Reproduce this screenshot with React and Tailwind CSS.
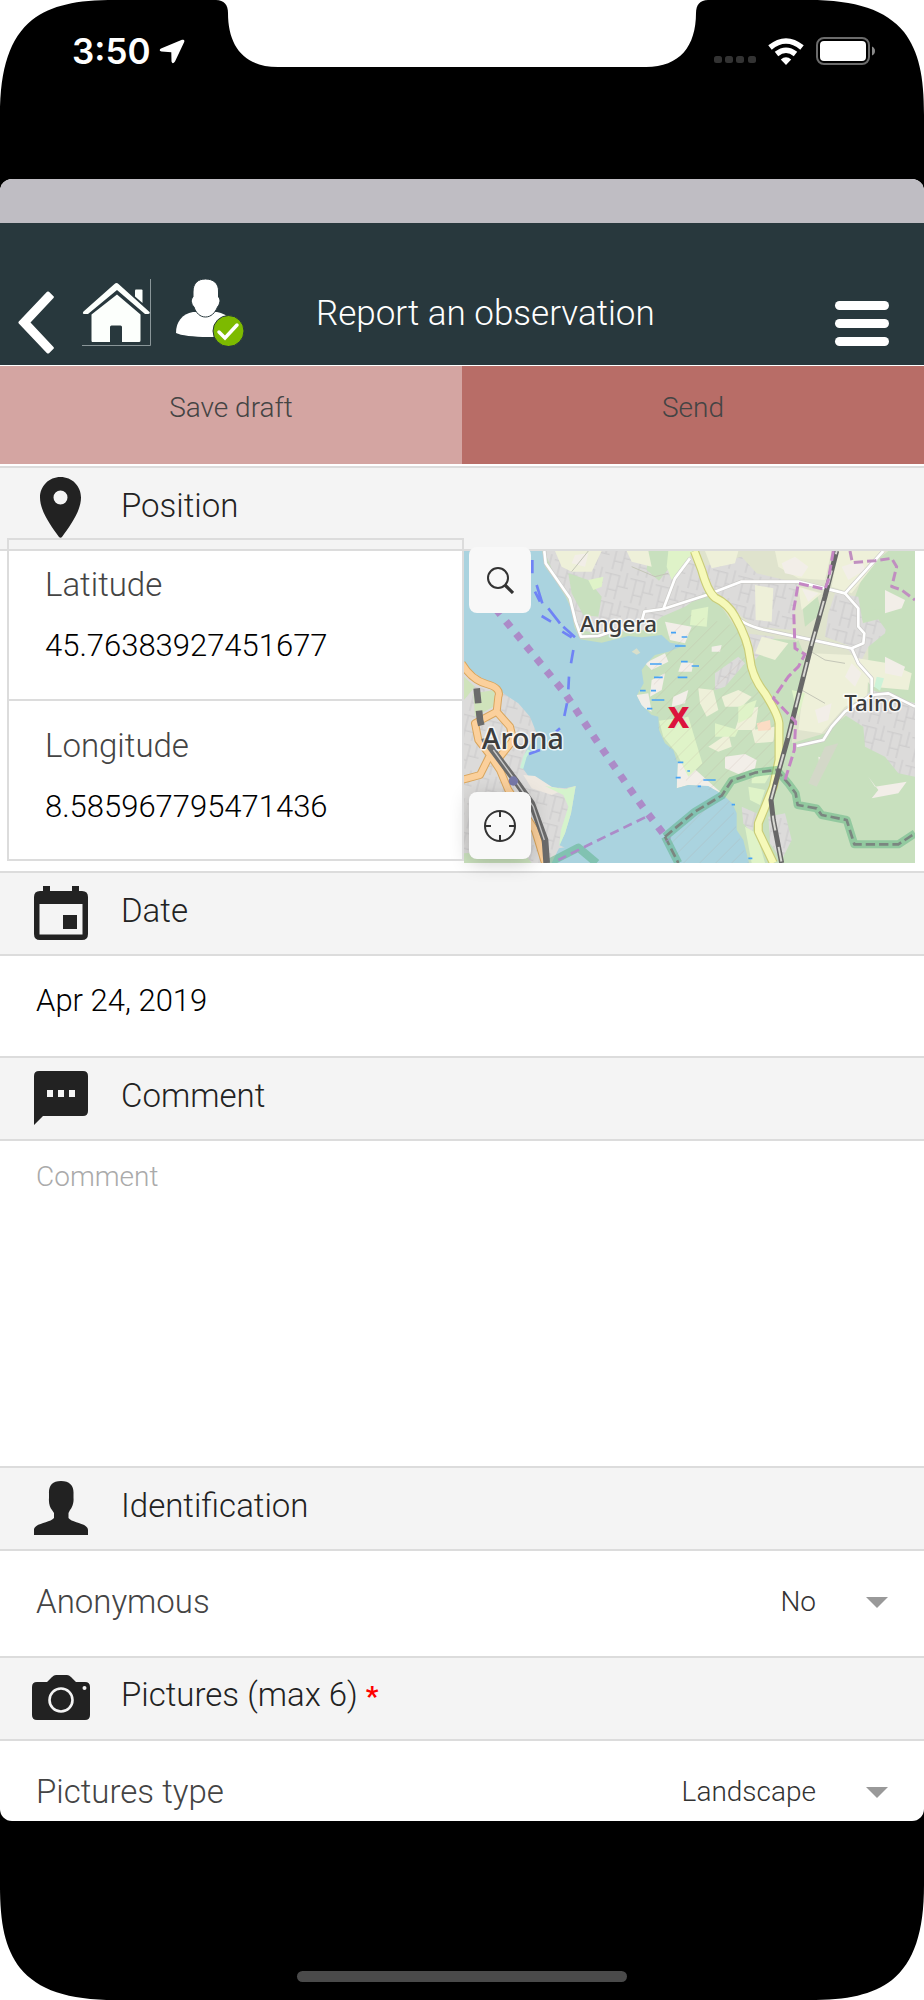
import { useState } from "react"

function Corner({ className }) {
  return (
    <svg viewBox="0 0 115 115" className={`absolute h-[115px] w-[115px] fill-white ${className}`} aria-hidden="true">
      <path d="M0 0H115C76 0 52 5 32 20C10 38 0 68 0 115Z" />
    </svg>
  )
}

function StatusBar() {
  return (
    <div className="flex h-[102px] items-center justify-between pr-12 pl-[72px] text-white">
      <div className="flex items-center gap-2">
        <span className="font-[Inter,sans-serif] text-[35px] leading-10 font-semibold">3:50</span>
        <svg viewBox="0 0 26 25" className="h-[25px] w-[26px] fill-white" aria-hidden="true">
          <path d="M2 9.500L23 .8Q26 0 25.200 3L16 22.500Q13.500 26 12.500 22.500L12.300 13.200L2.500 12.500Q-.8 11.500 2 9.500Z" />
        </svg>
      </div>
      <div className="flex items-center gap-3">
        <svg viewBox="0 0 42 28" className="h-7 w-[42px] fill-[#333]" aria-hidden="true">
          <rect x="0" y="19" width="8" height="7" rx="2.500" />
          <rect x="11" y="19" width="8" height="7" rx="2.500" />
          <rect x="22" y="19" width="8" height="7" rx="2.500" />
          <rect x="34" y="19" width="8" height="7" rx="2.500" />
        </svg>
        <svg viewBox="0 0 36 27" className="h-[27px] w-9" aria-hidden="true">
          <g fill="none" stroke="white" strokeWidth="5.500">
            <path d="M2 9.500Q18 -3.500 34 9.500" />
            <path d="M8.500 16Q18 8.500 27.500 16" />
          </g>
          <path d="M18 27L12.800 21.500Q18 17 23.200 21.500Z" fill="white" />
        </svg>
        <svg viewBox="0 0 60 28" className="h-7 w-[60px]" aria-hidden="true">
          <rect x="1" y="1" width="52" height="26" rx="7" fill="none" stroke="#6b6b6b" strokeWidth="2" />
          <rect x="4" y="4" width="46" height="20" rx="4" fill="white" />
          <path d="M56 9.500Q59 11 59 14T56 18.500Z" fill="#8a8a8a" />
        </svg>
      </div>
    </div>
  )
}

function Header() {
  return (
    <header className="flex h-[143px] items-start border-b border-white bg-[#28383d] pr-[35px] pl-[18px] text-white">
      <button type="button" aria-label="Back" className="mt-[68px]">
        <svg viewBox="0 0 36 63" className="h-[63px] w-9 fill-white">
          <path d="M29 .8Q30 0 31 .8L35.500 5.300Q36.300 6 35.500 7L12.500 31.500L35.500 56Q36.300 57 35.500 57.800L31 62.200Q30 63 29 62.200L.8 32.500Q0 31.500 .8 30.500Z" />
        </svg>
      </button>
      <button type="button" aria-label="Home" className="mt-14 ml-7">
        <svg viewBox="0 0 69 67" className="h-[67px] w-[69px]">
          <path d="M68.500 0V66.500H0" fill="none" stroke="#8a9699" />
          <g fill="#fcfffc">
            <path d="M53 11.500Q53 10.500 54 10.500H59.500Q60.500 10.500 60.500 11.500V24L53 17.500Z" />
            <path d="M34.500 4Q35.500 4 36.500 5L67.500 33Q68.500 34.500 66 35H63L35 11L6 35H2Q0 34.500 1.500 32.500L32.500 5Q33.500 4 34.500 4Z" />
            <path d="M35 15.500L58.500 35.500V61.500Q58.500 63 57 63H40V48Q40 46.500 38.500 46.500H29.500Q28 46.500 28 48V63H10.500Q9.500 63 9.500 61.500V35.500Z" />
          </g>
        </svg>
      </button>
      <button type="button" aria-label="Account" className="mt-14 ml-[25px]">
        <svg viewBox="0 0 68 67" className="h-[67px] w-[68px]">
          <path d="M17 33C6 35 0 43 0 54C8 58.500 50 60 58 54C58 43 52 35 41 33Z" fill="white" />
          <path d="M29.500 0C37 0 43 4 42.500 13V18C45 20 44 25 41.500 28C39 34 35 38 29.500 38S20 34 18 28C15 25 14.500 20 17 18V13C17 4 22 0 29.500 0Z" fill="white" stroke="#28383d" />
          <circle cx="52.500" cy="52" r="15.500" fill="#7dba00" stroke="#28383d" />
          <path d="M43 53L49 59L61 46" fill="none" stroke="white" strokeWidth="3.500" strokeLinecap="round" />
        </svg>
      </button>
      <h1 className="mt-[65px] ml-[72px] flex-1 text-[35px] leading-[52px] font-[350]">Report an observation</h1>
      <button type="button" aria-label="Menu" className="mt-[78px] flex w-[54px] flex-col gap-[9px]">
        <span className="h-[9px] w-full rounded-full bg-white" />
        <span className="h-[9px] w-full rounded-full bg-white" />
        <span className="h-[9px] w-full rounded-full bg-white" />
      </button>
    </header>
  )
}

function PinIcon() {
  return (
    <svg viewBox="0 0 41 61" className="h-[61px] w-[41px] fill-[#222]" aria-hidden="true">
      <path fillRule="evenodd" d="M20.500 0C32 0 41 9 41 20.500C41 34 30 49 22 60Q20.500 61.500 19 60C11 49 0 34 0 20.500C0 9 9 0 20.500 0ZM20.500 13.500A7 7 0 1 0 20.500 27.500A7 7 0 1 0 20.500 13.500Z" />
    </svg>
  )
}

function CalendarIcon() {
  return (
    <svg viewBox="0 0 54 54" className="h-[54px] w-[54px] fill-[#222]" aria-hidden="true">
      <path fillRule="evenodd" d="M9 0H16V5H38V0H45V5H48Q54 5 54 11V48Q54 54 48 54H6Q0 54 0 48V11Q0 5 6 5H9ZM5.500 18V48.500H48.500V18Z" />
      <rect x="29" y="29" width="14" height="14" />
    </svg>
  )
}

function CommentIcon() {
  return (
    <svg viewBox="0 0 54 54" className="h-[54px] w-[54px] fill-[#222]" aria-hidden="true">
      <path fillRule="evenodd" d="M5 0H49Q54 0 54 5V40Q54 45 49 45H9L0 54V5Q0 0 5 0ZM13 19V26H19V19ZM24 19V26H30V19ZM35 19V26H41V19Z" />
    </svg>
  )
}

function PersonIcon() {
  return (
    <svg viewBox="0 0 54 54" className="h-[54px] w-[54px] fill-[#222]" aria-hidden="true">
      <path d="M27 0C36 0 40 5 39.500 13V17C40 22 38 27 36 29L34.500 32V37C38 42 54 42 54 49V54H0V49C0 42 16 42 20 37V32L18 29C16 27 14.500 22 15 17V13C14.500 5 18 0 27 0Z" />
    </svg>
  )
}

function CameraIcon() {
  return (
    <svg viewBox="0 0 58 45" className="h-[45px] w-[58px] fill-[#222]" aria-hidden="true">
      <path d="M20 2Q22 0 24 0H35Q37 0 39 2L44 7H53Q58 7 58 12V40Q58 45 53 45H5Q0 45 0 40V12Q0 7 5 7H15Z" />
      <circle cx="29" cy="25" r="11.500" fill="none" stroke="#f4f4f4" strokeWidth="2.600" />
      <circle cx="52.500" cy="13" r="2" fill="#f4f4f4" />
    </svg>
  )
}

function SectionTitle({ icon, children }) {
  return (
    <div className="flex h-[85px] items-center border-y-2 border-[#dcdcdc] bg-[#f4f4f4]">
      <div className="flex w-[121px] justify-center pb-[2px]">{icon}</div>
      <h2 className="pb-[6px] text-[33px] leading-10 font-[350] text-[#222]">{children}</h2>
    </div>
  )
}

function SelectRow({ id, label, value, onChange, options }) {
  return (
    <div className="flex items-center gap-[50px] px-9">
      <label htmlFor={id} className="flex-1 text-[33px] leading-10 text-[#444]">{label}</label>
      <select id={id} value={value} onChange={onChange} className="appearance-none bg-transparent text-[28px] leading-10 text-[#333] [text-align-last:right]">
        {options.map((option) => <option key={option}>{option}</option>)}
      </select>
      <svg viewBox="0 0 22 11" className="h-[11px] w-[22px] fill-[#999]" aria-hidden="true">
        <path d="M0 0H22L11 11Z" />
      </svg>
    </div>
  )
}

const woods = [
  "M340 130L400 150L440 200L430 260L385 255L350 190Z",
  "M580 63H640L645 110L612 152L575 120Z",
  "M1040 210L1085 190L1100 250L1050 290Z",
  "M1250 240L1380 230V400L1310 410L1255 350L1300 310Z",
]

const urban = [
  "M268 63H712L760 180L690 230L620 260L570 300L430 310L372 300L350 220L300 140Z",
  "M740 110L860 80L905 130L1030 160L1010 300L900 290L835 240L780 195Z",
  "M1140 190L1210 200L1230 320L1190 350L1110 320L1120 250Z",
  "M1250 480L1380 520V740L1330 730L1290 680L1230 650L1225 590L1170 555Z",
  "M870 310L960 320L900 390Z",
  "M1180 290L1300 260L1290 310L1240 350L1215 400L1180 360Z",
  "M780 430L850 380L870 400L810 470L780 480Z",
  "M940 860L990 850L1010 930L980 990L945 940Z",
  "M860 830L905 850L890 910L865 880Z",
]

const cream = [
  "M300 63H440L410 125L350 125L320 110Z", "M515 63H580L590 110L530 95Z",
  "M750 63H850L840 100L770 115Z", "M960 63H1130L1110 150L1030 145L970 110Z",
  "M1150 63H1290L1190 190L1130 170Z", "M900 165L955 175L950 275L902 270Z",
  "M1030 170L1100 190L1040 240Z", "M1070 370L1190 375L1240 440L1235 500L1170 530L1100 610L1030 600L1045 480Z",
  "M1180 380L1300 400L1370 430L1360 480L1250 470Z", "M730 475L775 480L790 540L755 560L735 520Z",
  "M760 650L820 610L830 650L790 665Z", "M860 540L910 530L900 600L840 600Z",
  "M890 600L960 590L955 635L900 640Z", "M800 500L850 480L890 500L860 530L810 530Z",
  "M920 320L1000 340L960 390L900 370Z",
]

const pale = [
  "M810 680L870 672L905 690L900 715L850 732L810 715Z", "M570 400L630 370L640 395L590 420Z",
  "M545 495L580 490L590 545L560 530Z", "M590 450L630 430L620 480L585 500Z",
  "M680 395L715 400L710 425L670 425Z", "M630 275L710 290L690 340L645 330Z",
  "M668 695L700 700L800 790L760 770L700 765L665 775Z", "M655 500L700 480L690 520L650 530Z",
  "M1240 740L1260 770L1355 755L1330 790L1250 805L1270 780Z", "M1090 680L1120 690L1095 715Z",
  "M770 350L800 345L795 365L770 365Z", "M1290 180L1350 210L1340 235L1290 250Z",
  "M980 100L1020 80L1060 110L1040 140L990 130Z", "M1040 175L1090 190L1060 215Z",
  "M1160 110L1220 90L1230 120L1180 150Z", "M1080 540L1130 520L1120 570L1090 580Z",
  "M1190 400L1220 430L1200 470L1170 440Z", "M1290 380L1350 410L1340 440L1290 430Z",
  "M360 75L400 70L390 110L350 100Z",
]

const meadow = [
  "M612 572L700 560L742 700L700 740L665 670L625 620Z", "M710 240L760 230L755 290L705 285Z",
  "M640 63H712L690 110L650 150L635 110Z", "M850 530L905 510L890 560L850 580Z",
  "M890 720L950 725L930 760L890 760Z", "M870 890L905 910L930 999H890Z",
  "M780 580L850 600L840 620L780 620Z", "M880 770L930 780L915 825L885 810Z",
  "M1010 480L1050 490L1030 560Z", "M400 150L445 140L440 170L415 180Z",
]

const whiteRoads = [
  "M268 63L272 100L345 205L362 275L378 320L430 318L560 275L568 245L625 237L755 195L858 155L1030 155L1170 190L1285 63",
  "M705 85L660 145L625 237",
  "M835 250Q860 285 930 300L1190 355L1225 340L1228 310L1210 290L1210 235L1170 190",
  "M1190 355L1210 400L1250 445V495L1300 490L1380 530",
  "M1250 495L1170 545L1130 590L1105 630L1025 648",
]

const orangeRoads = [
  "M20 400Q50 450 95 462T130 500L125 545L165 590L175 630L135 680",
  "M125 545L60 580L70 630L105 675L75 735L20 750",
  "M105 675L135 720L160 780L240 900L270 999",
]

const provincialRoad = "M718 63L740 120Q758 185 780 203Q820 222 840 260Q880 330 885 385T930 490Q970 555 972 580L972 690L955 770L910 880V905L955 999"
const railway = "M1145 63L1110 200L1068 350L1030 500L1000 620L968 735L948 810L955 870L980 999"
const marsh = "M648 308H663M680 321H697M660 348H692M585 402H620M678 395H698M710 408H732M597 442H623M668 442H697M555 482H572M588 482H603M590 510H628M576 536H592M668 697H685M697 723H705M662 743H677M745 750H782M728 769H738M830 824H840M880 985H892"

// OpenStreetMap style tile around Lago Maggiore
function MapView() {
  return (
    <svg viewBox="27 63 1353 936" preserveAspectRatio="xMidYMid slice" className="absolute inset-0 h-full w-full" role="img" aria-label="Map of Angera, Arona and Taino">
      <defs>
        <pattern id="streets" width="78" height="86" patternUnits="userSpaceOnUse" patternTransform="rotate(14)">
          <rect width="78" height="86" fill="#dcdbda" />
          <path d="M0 14H45V86M45 45H78M18 14V60H45M66 0V45M18 60V86" fill="none" stroke="#cbcacb" strokeWidth="3" />
        </pattern>
        <pattern id="reserve" width="34" height="34" patternUnits="userSpaceOnUse" patternTransform="rotate(45)">
          <path d="M0 0V34" stroke="#b79c90" strokeWidth="2" opacity=".45" />
        </pattern>
      </defs>
      <rect x="27" y="63" width="1353" height="936" fill="#c8e0be" />
      <path d="M730 63H1300L1230 120L1200 200L1240 330L1240 500L1110 610L1010 640L1030 480L1050 380L1020 330L860 320L780 200Z" fill="#dfe3cd" />
      <path d="M1230 130L1380 110V300L1290 250L1220 200Z" fill="#c8e0be" />
      <path d="M960 390L1030 330L1050 380L950 510L915 470Z" fill="#c8e0be" />
      {urban.map((d) => <path key={d} d={d} fill="url(#streets)" />)}
      {woods.map((d) => <path key={d} d={d} fill="#c8e0be" />)}
      {cream.map((d) => <path key={d} d={d} fill="#eef0d9" />)}
      {pale.map((d) => <path key={d} d={d} fill="#f2eee8" />)}
      {meadow.map((d) => <path key={d} d={d} fill="#dff3c8" />)}
      <path d="M905 580L945 570L948 600L910 603Z" fill="#fbdcc4" />
      <path d="M1265 440L1287 445L1275 482L1258 470Z" fill="#cdf2d8" />
      <path d="M1110 650L1150 640L1085 770L1060 760Z" fill="#d3d8c8" />

      <path d="M27 63H262L270 110L300 150L332 200L350 240L358 290L375 328L440 338L520 318L560 322L620 315L645 338L690 345L640 365L600 375L575 400L560 420L566 460L545 497L560 525L590 555L610 560L612 600L630 640L655 660L668 700L665 775L700 765L760 768L800 792L832 820L845 850L845 900L865 930L882 999H27Z" fill="#aad3df" />
      <path d="M530 365L545 355L556 368L545 374Z" fill="#d8dfcb" />
      <path d="M27 400L60 430L130 480L190 520L225 560L245 610L212 665L200 710L225 745L280 770L330 775L362 768L348 850L330 910L312 945L430 999H27Z" fill="url(#streets)" />
      <path d="M55 490L120 480L115 530L60 560ZM27 440L60 470L27 510Z" fill="#cfe3bb" />
      <path d="M205 735L240 738L290 770L320 782L290 795L230 775Z" fill="#eee8e0" />
      <path d="M270 768L330 778L362 768L348 850L330 910L312 950L318 900L340 830L325 795Z" fill="#d5f3cc" />
      <path d="M222 660L210 680L200 715" fill="none" stroke="#c9f0d8" strokeWidth="10" />
      <path d="M27 970L200 960L230 999H27Z" fill="#cbe2be" />
      <path d="M312 955L370 945L440 999H290Z" fill="#aad3df" />
      <path d="M690 250L850 290L900 440L965 570L960 720L800 790L700 765L610 600L590 400Z" fill="url(#reserve)" />
      <path d="M630 920L800 792L832 820L845 900L882 999H670Z" fill="url(#reserve)" />

      <g fill="none" strokeLinejoin="round">
        {whiteRoads.map((d) => <path key={d} d={d} stroke="#cccbc8" strokeWidth="12" />)}
        {whiteRoads.map((d) => <path key={d} d={d} stroke="white" strokeWidth="8" />)}
        <path d="M350 125L400 63M1060 360L1110 390L1170 400M1040 480L1110 520M530 110L600 140L640 130" stroke="#c4c6b8" strokeWidth="3" />
        {orangeRoads.map((d) => <path key={d} d={d} stroke="#d9a55c" strokeWidth="24" />)}
        {orangeRoads.map((d) => <path key={d} d={d} stroke="#fbd09c" strokeWidth="18" />)}
        <path d={provincialRoad} stroke="#c9cc78" strokeWidth="27" />
        <path d={provincialRoad} stroke="#f6f9b9" strokeWidth="20" />

        <g opacity=".45" stroke="#4fae79" strokeWidth="24">
          <path d="M630 920L720 845L800 797L830 752L900 728L965 720L1000 760L1022 790L1028 825L1085 835L1100 855L1175 870L1198 943L1330 943L1380 910M630 920L670 999M280 999L370 953L425 999" />
        </g>
        <path d="M630 920L720 845L800 797L830 752L900 728L965 720L1000 760L1022 790L1028 825L1085 835L1100 855L1175 870L1198 943L1330 943L1380 910M630 920L670 999" stroke="#7b8680" strokeWidth="8" strokeDasharray="28 12" />

        <path d={railway} stroke="#686868" strokeWidth="15" />
        <path d={railway} stroke="#d8d8d3" strokeWidth="6" strokeDasharray="45 50" strokeDashoffset="-60" />
        <path d="M65 475L75 570L90 630L180 750L230 820L270 930L275 999" stroke="#6b6b6b" strokeWidth="20" strokeDasharray="45 22 45 40 500" />
        <path d="M115 660L180 750L235 830L268 930" stroke="#c9c9c9" strokeWidth="4" />
        <circle cx="175" cy="753" r="14" fill="#7678a8" />

        <path d="M1135 63L1120 150L1110 178L1030 160L1016 240L1020 355L1050 373L1030 410L1000 440L955 505L1022 575L1018 660L990 750" stroke="#c486c4" strokeWidth="9" strokeDasharray="30 12" />
        <path d="M1185 63L1192 98L1260 92L1310 85L1325 110L1310 170L1340 180L1380 210" stroke="#c08fc0" strokeWidth="9" strokeDasharray="28 12" />
        <path d="M125 240L240 380L330 490L430 640L520 770L570 840L640 930" stroke="#ac8bc8" strokeWidth="22" strokeDasharray="22 26" strokeDashoffset="4" />
        <path d="M570 862L400 945L310 990" stroke="#ac8bc8" strokeWidth="8" strokeDasharray="28 16" />
        <path d="M232 90V130M245 165L262 220M240 185L255 215M280 235L315 280M260 258L288 275M325 290L360 322M322 305L350 322M355 360L348 400M342 440L340 478M336 520L328 558M315 595L303 605M255 660L222 672" stroke="#6f83f5" strokeWidth="8" />
        <path d={marsh} stroke="#46a3f5" strokeWidth="5" />
      </g>

      <g fill="#3c3c3c" stroke="white" strokeOpacity=".8" strokeWidth="9" strokeLinejoin="round" paintOrder="stroke" fontFamily="Noto Sans, sans-serif" fontWeight="500">
        <text x="375" y="307" fontSize="67">Angera</text>
        <text x="80" y="657" fontSize="86">Arona</text>
        <text x="1168" y="544" fontSize="67">Taino</text>
      </g>
      <text x="671" y="593" fontSize="112" fontWeight="700" textAnchor="middle" fill="#dc143c" fontFamily="Open Sans, sans-serif">x</text>
    </svg>
  )
}

function CoordinateField({ id, label, value, onChange }) {
  return (
    <div className="flex flex-1 flex-col gap-[21px] px-9 pt-[25px]">
      <label htmlFor={id} className="text-[33px] leading-10 text-[#444]">{label}</label>
      <input id={id} type="text" value={value} onChange={onChange} className="w-full text-[31px] leading-10 text-black outline-none" />
    </div>
  )
}

function App() {
  const [latitude, setLatitude] = useState("45.76383927451677")
  const [longitude, setLongitude] = useState("8.585967795471436")
  const [date, setDate] = useState("Apr 24, 2019")
  const [comment, setComment] = useState("")
  const [anonymous, setAnonymous] = useState("No")
  const [picturesType, setPicturesType] = useState("Landscape")

  return (
    <div className="relative bg-black font-[Roboto,sans-serif] font-[350]">
      <Corner className="top-0 left-0" />
      <Corner className="top-0 right-0 rotate-90" />
      <Corner className="right-0 bottom-0 rotate-180" />
      <Corner className="bottom-0 left-0 -rotate-90" />
      <svg viewBox="0 0 492 67" className="absolute top-0 left-1/2 h-[67px] w-[492px] -translate-x-1/2 fill-white" aria-hidden="true">
        <path d="M0 0C8 0 12 5 12 13C12 46 28 67 62 67H430C464 67 480 46 480 13C480 5 484 0 492 0Z" />
      </svg>
      <StatusBar />

      <main className="mt-[77px] overflow-hidden rounded-xl bg-white">
        <div className="h-11 bg-[#bfbdc3]" />
        <Header />
        <div className="mb-[2px] grid grid-cols-2 text-[28px] leading-10 text-[#444]">
          <button type="button" className="bg-[#d4a5a2] pt-[22px] pb-9">Save draft</button>
          <button type="button" className="bg-[#b86d67] pt-[22px] pb-9">Send</button>
        </div>

        <SectionTitle icon={<PinIcon />}>Position</SectionTitle>
        <div className="grid grid-cols-[457fr_451fr] pr-[9px] pl-[7px] pb-2">
          <div className="z-10 -mt-[13px] flex h-[323px] flex-col divide-y-2 divide-[#dcdcdc] border-2 border-[#dcdcdc]">
            <CoordinateField id="latitude" label="Latitude" value={latitude} onChange={(e) => setLatitude(e.target.value)} />
            <CoordinateField id="longitude" label="Longitude" value={longitude} onChange={(e) => setLongitude(e.target.value)} />
          </div>
          <div className="relative h-[312px]">
            <MapView />
            <button type="button" aria-label="Search place" className="absolute -top-1 left-[5px] flex h-[66px] w-[62px] items-center justify-center rounded-lg bg-[#f8f8f8]">
              <svg viewBox="0 0 27 27" className="h-[27px] w-[27px]" fill="none" stroke="#333" strokeWidth="2">
                <circle cx="11" cy="11" r="10" />
                <path d="M18 18L26 26" strokeWidth="3.200" />
              </svg>
            </button>
            <button type="button" aria-label="Locate me" className="absolute bottom-1 left-[5px] flex h-[67px] w-[62px] items-center justify-center rounded-lg bg-[#f8f8f8] shadow-[0_4px_20px_rgba(0,0,0,0.2)]">
              <svg viewBox="0 0 32 32" className="h-8 w-8" fill="none" stroke="#333" strokeWidth="2">
                <circle cx="16" cy="16" r="15" />
                <path d="M16 1V7M16 25V31M1 16H7M25 16H31" />
              </svg>
            </button>
          </div>
        </div>

        <SectionTitle icon={<CalendarIcon />}>Date</SectionTitle>
        <div className="px-9 pt-[25px] pb-[35px]">
          <input type="text" aria-label="Date" value={date} onChange={(e) => setDate(e.target.value)} className="block h-10 w-full text-[31px] leading-10 text-black outline-none" />
        </div>

        <SectionTitle icon={<CommentIcon />}>Comment</SectionTitle>
        <textarea aria-label="Comment" placeholder="Comment" value={comment} onChange={(e) => setComment(e.target.value)} className="block h-[325px] w-full resize-none px-9 py-4 text-[28px] leading-10 outline-none placeholder:text-[#aaa]" />

        <SectionTitle icon={<PersonIcon />}>Identification</SectionTitle>
        <div className="pt-[31px] pb-[34px]">
          <SelectRow id="anonymous" label="Anonymous" value={anonymous} onChange={(e) => setAnonymous(e.target.value)} options={["No", "Yes"]} />
        </div>

        <SectionTitle icon={<CameraIcon />}>Pictures (max 6) <span className="text-[28px] font-bold text-[#f00]">*</span></SectionTitle>
        <div className="pt-[31px] pb-[9px]">
          <SelectRow id="picturesType" label="Pictures type" value={picturesType} onChange={(e) => setPicturesType(e.target.value)} options={["Landscape", "Detail"]} />
        </div>
      </main>

      <div className="flex h-[179px] items-end justify-center pb-[18px]">
        <div className="h-[11px] w-[330px] rounded-full bg-[#4a4a4a]" />
      </div>
    </div>
  )
}

export default App
